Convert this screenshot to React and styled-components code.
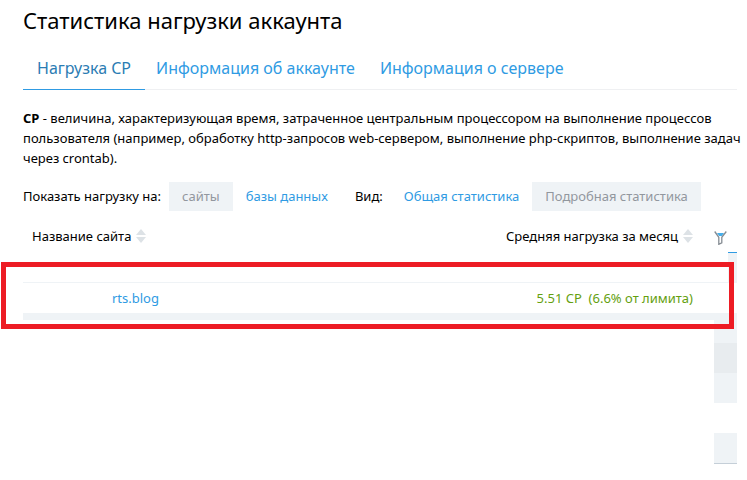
import React from 'react';
import styled, { createGlobalStyle } from 'styled-components';

const tabs = ['Нагрузка CP', 'Информация об аккаунте', 'Информация о сервере'];
const strips = ['#eff3f6', '#e8ecef', '#eff3f6', '#fff', '#eff3f6'];

const SortIcon = () => (
    <SortSvg width="10" height="14" viewBox="0 0 10 14" aria-hidden="true">
        <path d="M5 0L10 6H0z" />
        <path d="M0 8H10L5 14z" />
    </SortSvg>
);

const FilterIcon = () => (
    <FilterSvg width="13" height="14" viewBox="0 0 13 14" aria-hidden="true">
        <path d="M3 2h7L7.800 5H5.200z" fill="#45aeea" />
        <path d="M.7 .5L4.800 6.300V13.300L7.800 11.800V6.300L12.300 .5" fill="none" stroke="#858c93" strokeWidth="1.300" />
    </FilterSvg>
);

const App = () => (
    <>
        <GlobalStyle />
        <Page>
            <Title>Статистика нагрузки аккаунта</Title>
            <Tabs>
                {tabs.map((tab, index) => (
                    <Tab key={tab} href="#" $active={index === 0}>{tab}</Tab>
                ))}
            </Tabs>
            <Description>
                <b>CP</b> - величина, характеризующая время, затраченное центральным процессором на выполнение процессов
                пользователя (например, обработку http-запросов web-сервером, выполнение php-скриптов, выполнение задач
                через crontab).
            </Description>
            <Toolbar>
                <Label>Показать нагрузку на:</Label>
                <Option $active>сайты</Option>
                <Option>базы данных</Option>
                <ViewLabel>Вид:</ViewLabel>
                <Option>Общая статистика</Option>
                <Option $active>Подробная статистика</Option>
            </Toolbar>
            <Stats>
                <Table>
                    <thead>
                        <tr>
                            <NameHead>
                                <SortButton>Название сайта<SortIcon /></SortButton>
                            </NameHead>
                            <LoadHead>
                                <SortButton>Средняя нагрузка за месяц<SortIcon /></SortButton>
                            </LoadHead>
                            <ToolHead>
                                <FilterButton aria-label="Фильтр"><FilterIcon /></FilterButton>
                            </ToolHead>
                        </tr>
                    </thead>
                    <tbody>
                        <tr>
                            <EmptyCell colSpan="2" />
                            <EmptyCell><MenuEdge /></EmptyCell>
                        </tr>
                        <tr>
                            <NameCell><a href="#">rts.blog</a></NameCell>
                            <LoadCell>5.51 CP&nbsp; (6.6% от лимита)</LoadCell>
                            <Cell />
                        </tr>
                    </tbody>
                </Table>
                <Highlight />
            </Stats>
            <Menu>
                {strips.map((color, index) => (
                    <Strip key={index} $color={color} $short={index === 0} />
                ))}
            </Menu>
        </Page>
    </>
);

export default App;

const GlobalStyle = createGlobalStyle`
    * {
        box-sizing: border-box;
    }

    body {
        margin: 0;
        background: #fff;
        color: #000;
        font: 13px/20px "Noto Sans", sans-serif;
    }

    a {
        color: #2f9be3;
        text-decoration: none;
    }

    button {
        border: 0;
        padding: 0;
        background: none;
        color: inherit;
        font: inherit;
        cursor: pointer;
    }
`;

const Page = styled.div`
    padding: 6px 10px 16px 23px;
`;

const Title = styled.h1`
    margin: 0;
    font-size: 22px;
    font-weight: 400;
    line-height: 28px;
`;

const Tabs = styled.nav`
    display: flex;
    gap: 11px;
    margin-top: 14px;
    border-bottom: 1px solid #eff0f2;
`;

const Tab = styled.a`
    margin-bottom: -1px;
    border-bottom: 1px solid ${(props) => (props.$active ? '#2f9be3' : 'transparent')};
    padding: ${(props) => (props.$active ? '0 14px' : '0 14px 0 0')};
    color: ${(props) => (props.$active ? '#2b7cb3' : '#2f9be3')};
    font-size: 16px;
    line-height: 41px;
`;

const Description = styled.p`
    margin: 18px -10px 14px 0;
`;

const Toolbar = styled.div`
    display: flex;
    align-items: baseline;
`;

const Label = styled.span`
    margin-right: 8px;
`;

const ViewLabel = styled(Label)`
    margin-left: 14px;
`;

const Option = styled.button`
    && {
        padding: 0 13px;
        background: ${(props) => (props.$active ? '#eff3f6' : 'none')};
        color: ${(props) => (props.$active ? '#92979e' : '#2f9be3')};
        line-height: 29px;
    }
`;

const Stats = styled.div`
    position: relative;
    margin-top: 7px;
`;

const Table = styled.table`
    width: 100%;
    border-spacing: 0;
`;

const HeadCell = styled.th`
    height: 34px;
    padding: 2px 0 0;
    font-weight: 400;
    text-align: left;
`;

const NameHead = styled(HeadCell)`
    padding-left: 9px;
`;

const LoadHead = styled(HeadCell)`
    padding-right: 21px;
    text-align: right;
`;

const ToolHead = styled(HeadCell)`
    width: 23px;
    padding-top: 6px;
`;

const SortButton = styled.button`
    && {
        display: inline-flex;
        align-items: center;
        gap: 5px;
    }
`;

const SortSvg = styled.svg`
    fill: #dde2e6;
`;

const FilterSvg = styled.svg`
    display: block;
`;

const FilterButton = styled.button`
    && {
        display: block;
    }
`;

const EmptyCell = styled.td`
    height: 31px;
    padding: 0;
    border-bottom: 1px solid #eff3f6;
`;

const MenuEdge = styled.div`
    width: 9px;
    height: 30px;
    margin-left: auto;
    border-top: 1px solid #2f9be3;
    background: #eff3f6;
`;

const Cell = styled.td`
    height: 37px;
    padding: 0;
    border-bottom: 7px solid #eff3f6;
`;

const NameCell = styled(Cell)`
    padding-left: 89px;
`;

const LoadCell = styled(Cell)`
    padding-right: 21px;
    color: #64a00f;
    text-align: right;
`;

const Highlight = styled.div`
    position: absolute;
    top: 44px;
    right: 3px;
    bottom: -9px;
    left: -22px;
    border: 5px solid #ed1c24;
    pointer-events: none;
`;

const Menu = styled.div`
    width: 23px;
    margin-left: auto;
    border-bottom: 1px solid #c5cfd8;
`;

const Strip = styled.div`
    height: ${(props) => (props.$short ? 23 : 30)}px;
    background: ${(props) => props.$color};
`;
